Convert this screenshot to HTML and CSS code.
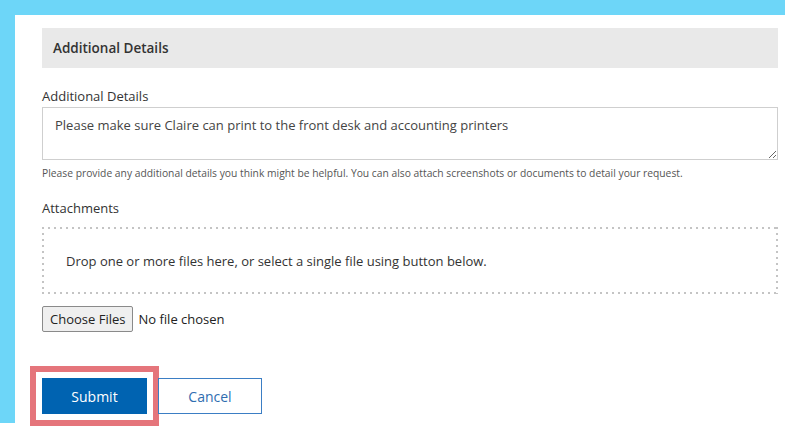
FILE: index.html
```html
<!DOCTYPE html>
<html lang="en">
<head>
    <meta charset="UTF-8">
    <meta name="viewport" content="width=device-width, initial-scale=1.0">
    <title>Request - Additional Details</title>
    <link rel="stylesheet" href="styles.css">
</head>

<body>
    <div class="page">
        <h3 class="section-title">Additional Details</h3>

        <form class="request-form" onsubmit="return false;">
            <label class="field-label" for="details">Additional Details</label>
            <textarea id="details" class="details-box">Please make sure Claire can print to the front desk and accounting printers</textarea>
            <p class="help-text">Please provide any additional details you think might be helpful. You can also attach screenshots or documents to detail your request.</p>

            <p class="field-label attach-label">Attachments</p>
            <div class="dropzone">Drop one or more files here, or select a single file using button below.</div>

            <div class="file-row">
                <label class="file-btn">Choose Files<input type="file" id="files" hidden></label>
                <span class="file-name" id="file_name">No file chosen</span>
            </div>

            <div class="actions">
                <button type="submit" class="btn btn-primary">Submit</button>
                <button type="button" class="btn btn-outline">Cancel</button>
            </div>
        </form>
    </div>

    <script>
        document.getElementById("files").onchange = function () {
            var name = this.files.length ? this.files[0].name : "No file chosen";
            document.getElementById("file_name").textContent = name;
        }
    </script>
</body>
</html>
```

FILE: styles.css
```css
* {
    margin: 0;
    padding: 0;
    box-sizing: border-box;
}

body {
    font-family: 'Open Sans', 'Noto Sans', sans-serif;
    background-color: #fff;
    color: #333;
}

/* white card sitting on the cyan frame: top and left strips of the frame show */
.page {
    width: 800px;
    height: 439px;
    padding: 28px 22px 0 42px;
    background:
        linear-gradient(#6dd6f8, #6dd6f8) 0 0 / 785px 15px no-repeat,
        linear-gradient(#6dd6f8, #6dd6f8) 0 0 / 15px 423px no-repeat,
        #fff;
}

.section-title {
    background-color: #e9e9e9;
    height: 40px;
    line-height: 40px;
    padding-left: 11px;
    font-size: 13.5px;
    font-weight: 600;
    color: #333;
}

.request-form {
    display: flex;
    flex-direction: column;
    align-items: flex-start;
}

.field-label {
    font-size: 13px;
    line-height: 21px;
    color: #333;
    margin-top: 18px;
}

.details-box {
    width: 100%;
    height: 53px;
    border: 1px solid #cfcfcf;
    padding: 7px 12px;
    font-family: inherit;
    font-size: 13px;
    line-height: 20px;
    color: #444;
    resize: vertical;
}

.help-text {
    font-size: 10.3px;
    line-height: 14px;
    color: #555;
    margin-top: 6px;
}

.attach-label {
    margin-top: 18px;
    line-height: 20px;
}

.dropzone {
    width: 100%;
    height: 67px;
    margin-top: 9px;
    padding-left: 24px;
    display: flex;
    align-items: center;
    font-size: 13px;
    color: #333;
    /* dotted edge drawn with gradients so the dot spacing can be wider */
    background-image:
        linear-gradient(to right, #c4c4c4 2px, transparent 2px),
        linear-gradient(to right, #c4c4c4 2px, transparent 2px),
        linear-gradient(to bottom, #c4c4c4 2px, transparent 2px),
        linear-gradient(to bottom, #c4c4c4 2px, transparent 2px);
    background-size: 6px 2px, 6px 2px, 2px 6px, 2px 6px;
    background-position: 0 0, 0 100%, 0 0, 100% 0;
    background-repeat: repeat-x, repeat-x, repeat-y, repeat-y;
}

.file-row {
    display: flex;
    align-items: center;
    gap: 5px;
    margin-top: 12px;
}

.file-btn {
    display: inline-block;
    height: 26px;
    line-height: 24px;
    padding: 0 7px;
    background-color: #efefef;
    border: 1px solid #8a8a8a;
    border-radius: 2px;
    font-size: 13px;
    color: #222;
    cursor: pointer;
}

.file-name {
    font-size: 13px;
    color: #222;
}

.actions {
    display: flex;
    gap: 11px;
    margin-top: 46px;
}

.btn {
    width: 105px;
    height: 36px;
    font-family: inherit;
    font-size: 14px;
    cursor: pointer;
}

.btn-primary {
    background-color: #0063b1;
    color: #fff;
    border: none;
    outline: 6px solid #e5757b;
    outline-offset: 6px;
}

.btn-outline {
    width: 104px;
    background-color: #fff;
    color: #2f6db0;
    border: 1px solid #3b7ec4;
}
```
